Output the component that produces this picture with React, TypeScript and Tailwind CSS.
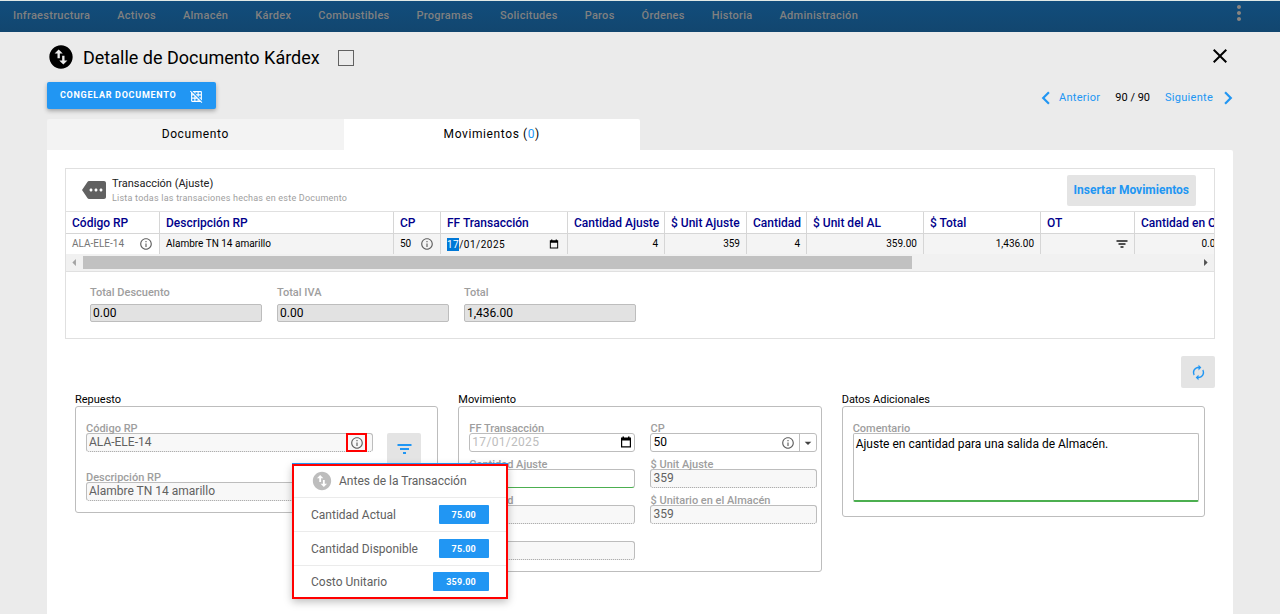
import { useEffect, useRef } from "react";
import type { ReactNode } from "react";
import {
  MdArrowDropDown,
  MdArrowLeft,
  MdArrowRight,
  MdAutorenew,
  MdChevronLeft,
  MdChevronRight,
  MdClose,
  MdGridOff,
  MdInfoOutline,
  MdMore,
  MdMoreVert,
  MdSwapVerticalCircle,
} from "react-icons/md";

const menu = [
  "Infraestructura",
  "Activos",
  "Almacén",
  "Kárdex",
  "Combustibles",
  "Programas",
  "Solicitudes",
  "Paros",
  "Órdenes",
  "Historia",
  "Administración",
];

const totals = [
  { id: "total-descuento", label: "Total Descuento", value: "0.00" },
  { id: "total-iva", label: "Total IVA", value: "0.00" },
  { id: "total", label: "Total", value: "1,436.00" },
];

const stock = [
  { label: "Cantidad Actual", value: "75.00" },
  { label: "Cantidad Disponible", value: "75.00" },
  { label: "Costo Unitario", value: "359.00" },
];

function CalendarIcon({ className }: { className: string }) {
  return (
    <svg viewBox="0 0 12 12" className={className} aria-hidden="true">
      <path d="M1 1.5h10v10H1z M2.2 4.4v5.9h7.6V4.4z" fill="currentColor" fillRule="evenodd" />
      <path d="M2.5 0.5h1.5v2H2.5z M8 0.5h1.5v2H8z" fill="currentColor" />
    </svg>
  );
}

function FilterSmallIcon({ className }: { className: string }) {
  return (
    <svg viewBox="0 0 12 8" className={className} aria-hidden="true">
      <path d="M0.5 0h11v2h-11z M2.5 3h7v2h-7z M4.5 6h3v2h-3z" fill="currentColor" />
    </svg>
  );
}

function FilterIcon({ className }: { className: string }) {
  return (
    <svg viewBox="0 0 15 10" className={className} aria-hidden="true">
      <path d="M0.5 0h14v2h-14z M3 4h9v2H3z M6 8h3v2H6z" fill="currentColor" />
    </svg>
  );
}

function Field({ id, label, children }: { id: string; label: string; children: ReactNode }) {
  return (
    <div className="min-w-0">
      <label htmlFor={id} className="block h-[10px] text-[11px] leading-[12px] font-medium whitespace-nowrap text-[#9e9e9e]">
        {label}
      </label>
      {children}
    </div>
  );
}

const fieldBox = "block h-[19px] w-full rounded-[3px] border border-[#bdbdbd] px-[2px] pb-[1px] text-xs outline-none";
const readOnlyBox = `${fieldBox} border-b-[#9e9e9e] [border-bottom-style:dotted] bg-[#f8f8f8] text-[#616161]`;

function Group({ title, className, children }: { title: string; className: string; children: ReactNode }) {
  return (
    <section className="min-w-0 px-[10px]">
      <h2 className="h-[14px] text-[11px] leading-[16px] text-black">{title}</h2>
      <div className={`rounded-[3px] border border-[#bdbdbd] px-[10px] ${className}`}>{children}</div>
    </section>
  );
}

function StockPopup() {
  return (
    <div
      role="dialog"
      aria-label="Antes de la Transacción"
      className="absolute top-[31px] left-[206px] z-10 w-[216px] border-2 border-[#ff0000] bg-white text-xs text-[#616161] shadow-[0_-1px_0_#2196f3,0_3px_8px_rgba(0,0,0,0.25)]"
    >
      <div className="flex h-[31px] items-center gap-[6px] pb-[2px] pl-[17px]">
        <MdSwapVerticalCircle className="size-[22px] text-[#bdbdbd]" />
        Antes de la Transacción
      </div>
      {stock.map((item) => (
        <div
          key={item.label}
          className="flex h-[34px] items-center justify-between border-t border-[#ebebeb] px-[17px] last:h-8"
        >
          <span>{item.label}</span>
          <span className="flex h-[19px] items-center rounded-[1px] bg-[#2196f3] px-[13px] text-[9px] font-bold tracking-wide text-white">
            {item.value}
          </span>
        </div>
      ))}
    </div>
  );
}

const th = "h-[22px] border-r border-b border-[#d6d6d6] px-[6px] text-left text-xs leading-[20px] font-medium whitespace-nowrap text-[#00008b] align-middle";
const cell = "h-[20px] border-r border-[#d6d6d6] px-[6px] py-0 text-[10px] leading-[20px] whitespace-nowrap align-middle";
const td = `${cell} bg-[#f4f4f4] text-black`;

function MovementsTable() {
  const dateRef = useRef<HTMLInputElement>(null);

  useEffect(() => {
    dateRef.current?.focus({ preventScroll: true });
    dateRef.current?.setSelectionRange(0, 2);
  }, []);

  return (
    <div className="overflow-hidden border-t border-[#e0e0e0]">
      <table className="w-[1162px] table-fixed border-separate border-spacing-0">
        <colgroup>
          <col className="w-[94px]" />
          <col className="w-[234px]" />
          <col className="w-[47px]" />
          <col className="w-[127px]" />
          <col className="w-[97px]" />
          <col className="w-[82px]" />
          <col className="w-[60px]" />
          <col className="w-[117px]" />
          <col className="w-[117px]" />
          <col className="w-[94px]" />
          <col />
        </colgroup>
        <thead>
          <tr>
            <th className={th}>Código RP</th>
            <th className={th}>Descripción RP</th>
            <th className={th}>CP</th>
            <th className={th}>FF Transacción</th>
            <th className={th}>Cantidad Ajuste</th>
            <th className={th}>$ Unit Ajuste</th>
            <th className={th}>Cantidad</th>
            <th className={th}>$ Unit del AL</th>
            <th className={th}>$ Total</th>
            <th className={th}>OT</th>
            <th className={th}>Cantidad en OT</th>
          </tr>
        </thead>
        <tbody>
          <tr>
            <td className={`${cell} text-[#757575]`}>
              <div className="flex items-center justify-between">
                ALA-ELE-14
                <MdInfoOutline className="size-[14px] text-[#616161]" />
              </div>
            </td>
            <td className={td}>Alambre TN 14 amarillo</td>
            <td className={td}>
              <div className="flex items-center justify-between">
                50
                <MdInfoOutline className="size-[14px] text-[#616161]" />
              </div>
            </td>
            <td className={td}>
              <div className="flex items-center justify-between">
                <input
                  ref={dateRef}
                  type="text"
                  aria-label="FF Transacción"
                  defaultValue="17/01/2025"
                  className="h-[13px] w-[80px] bg-transparent text-[10px] leading-[13px] tracking-wider outline-none selection:bg-[#0078d7] selection:text-white"
                />
                <CalendarIcon className="mr-[2px] size-[10px]" />
              </div>
            </td>
            <td className={`${td} text-right`}>4</td>
            <td className={`${td} text-right`}>359</td>
            <td className={`${td} text-right`}>4</td>
            <td className={`${td} text-right`}>359.00</td>
            <td className={`${td} text-right`}>1,436.00</td>
            <td className={td}>
              <FilterSmallIcon className="ml-auto h-2 w-3 text-[#505050]" />
            </td>
            <td className={`${td} text-right`}>0.00</td>
          </tr>
        </tbody>
      </table>
      <div className="flex h-[17px] items-center bg-[#f1f1f1]" aria-hidden="true">
        <MdArrowLeft className="size-[17px] text-[#a3a3a3]" />
        <div className="flex-1">
          <div className="h-[13px] w-[74.4%] bg-[#c1c1c1]" />
        </div>
        <MdArrowRight className="size-[17px] text-[#505050]" />
      </div>
    </div>
  );
}

export default function App() {
  return (
    <div className="flex min-h-screen flex-col bg-[#ebebeb] font-['Roboto',sans-serif] text-black">
      <header className="flex h-8 items-center justify-between border-t border-[#dfe9e6] bg-linear-to-b from-[#114d7c] to-[#12466f] pr-[33px] pl-[13px]">
        <nav className="flex gap-[27px] text-[11px] font-medium tracking-wide text-[#808080]">
          {menu.map((item) => (
            <a key={item} href="#">
              {item}
            </a>
          ))}
        </nav>
        <button type="button" aria-label="Más opciones" className="mb-[7px] text-[#8a8580]">
          <MdMoreVert className="-mr-[4px] size-6" />
        </button>
      </header>

      <main className="flex flex-1 flex-col px-[47px]">
        <div className="flex h-[50px] items-center justify-between pr-[1px]">
          <div className="flex items-center">
            <MdSwapVerticalCircle className="size-7" />
            <h1 className="mt-[2px] ml-2 text-lg">Detalle de Documento Kárdex</h1>
            <input
              type="checkbox"
              aria-label="Seleccionar documento"
              className="mt-[2px] ml-[18px] size-4 appearance-none border border-[#616161]"
            />
          </div>
          <button type="button" aria-label="Cerrar" className="mb-[2px]">
            <MdClose className="size-6" />
          </button>
        </div>

        <div className="flex h-[37px] items-start justify-between">
          <button
            type="button"
            className="flex h-[27px] items-center gap-[14px] rounded-[2px] bg-[#2196f3] px-[13px] pt-[1px] text-[9px] font-bold tracking-[0.08em] text-white shadow-[0_2px_4px_rgba(0,0,0,0.3)]"
          >
            CONGELAR DOCUMENTO
            <MdGridOff className="size-[13px] stroke-current" />
          </button>
          <div className="flex h-8 items-center gap-[15px] text-[11px]">
            <a href="#" className="flex items-center tracking-wide text-[#2196f3]">
              <MdChevronLeft className="size-[26px] stroke-current" />
              Anterior
            </a>
            <span>90 / 90</span>
            <a href="#" className="-mr-[8px] flex items-center gap-[2px] tracking-wide text-[#2196f3]">
              Siguiente
              <MdChevronRight className="size-[26px] stroke-current" />
            </a>
          </div>
        </div>

        <div role="tablist" className="flex h-[31px] text-xs tracking-wider">
          <button type="button" role="tab" aria-selected="false" className="w-1/4 rounded-tl-[2px] bg-[#f3f3f3] pb-[2px]">
            Documento
          </button>
          <button type="button" role="tab" aria-selected="true" className="w-1/4 rounded-tr-[2px] bg-white pb-[2px]">
            Movimientos (<span className="text-[#2196f3]">0</span>)
          </button>
        </div>

        <div className="flex-1 rounded-tr-[2px] bg-white px-[18px] pt-[18px]">
          <section className="border border-[#e0e0e0]">
            <div className="flex h-[42px] items-center justify-between pr-[18px] pl-4">
              <div className="flex items-center gap-[6px]">
                <MdMore className="size-6 text-[#616161]" />
                <div className="pt-[2px]">
                  <h2 className="text-[11px] leading-[14px] text-[#212121]">Transacción (Ajuste)</h2>
                  <p className="text-[9px] leading-[14px] tracking-wide text-[#9e9e9e]">
                    Lista todas las transaciones hechas en este Documento
                  </p>
                </div>
              </div>
              <button type="button" className="h-[31px] rounded-[2px] bg-[#e4e4e4] px-[7px] text-xs font-bold text-[#2196f3]">
                Insertar Movimientos
              </button>
            </div>

            <MovementsTable />

            <div className="flex gap-[15px] border-t border-[#e0e0e0] px-6 pt-[14px] pb-4">
              {totals.map((item) => (
                <div key={item.id} className="w-[172px]">
                  <label htmlFor={item.id} className="mb-[5px] block text-[11px] leading-[13px] font-medium text-[#9e9e9e]">
                    {item.label}
                  </label>
                  <input
                    id={item.id}
                    type="text"
                    readOnly
                    value={item.value}
                    className="block h-[18px] w-full rounded-[2px] border border-[#bdbdbd] bg-[#e2e2e2] px-[2px] text-xs outline-none"
                  />
                </div>
              ))}
            </div>
          </section>

          <div className="mt-[17px] flex justify-end">
            <button
              type="button"
              aria-label="Actualizar"
              className="flex h-8 w-[34px] items-center justify-center rounded-[2px] bg-[#e4e4e4] text-[#2196f3]"
            >
              <MdAutorenew className="size-[17px]" />
            </button>
          </div>

          <div className="mt-1 grid grid-cols-3 items-start">
            <Group title="Repuesto" className="pt-4 pb-[11px]">
              <div className="flex justify-between gap-[14px] pr-[6px]">
                <div className="relative min-w-0 flex-1">
                  <Field id="codigo-rp" label="Código RP">
                    <input id="codigo-rp" type="text" readOnly value="ALA-ELE-14" className={readOnlyBox} />
                  </Field>
                  <button
                    type="button"
                    aria-label="Información del repuesto"
                    className="absolute top-[10px] right-[6px] flex h-[19px] w-[21px] items-center justify-center border-2 border-[#ff0000] bg-[#f8f8f8]"
                  >
                    <MdInfoOutline className="size-[14px] shrink-0 text-[#616161]" />
                  </button>
                  <div className="absolute top-[10px] left-0">
                    <StockPopup />
                  </div>
                </div>
                <button
                  type="button"
                  aria-label="Filtrar repuestos"
                  className="mt-[10px] flex h-8 w-[34px] shrink-0 items-center justify-center rounded-[2px] bg-[#e4e4e4] text-[#2196f3]"
                >
                  <FilterIcon className="h-[10px] w-[15px]" />
                </button>
              </div>
              <div className="mt-[7px] pr-4">
                <Field id="descripcion-rp" label="Descripción RP">
                  <input id="descripcion-rp" type="text" readOnly value="Alambre TN 14 amarillo" className={readOnlyBox} />
                </Field>
              </div>
            </Group>

            <Group title="Movimiento" className="pt-4 pb-[11px]">
              <div className="-mr-[6px] grid grid-cols-2 gap-x-[15px] gap-y-[7px]">
                <Field id="ff-transaccion" label="FF Transacción">
                  <div className="relative">
                    <input
                      id="ff-transaccion"
                      type="text"
                      readOnly
                      value="17/01/2025"
                      className={`${fieldBox} tracking-wide text-[#bdbdbd]`}
                    />
                    <CalendarIcon className="absolute top-[3px] right-[3px] size-[12px]" />
                  </div>
                </Field>
                <Field id="cp" label="CP">
                  <div className="flex h-[19px] items-center rounded-[3px] border border-[#bdbdbd]">
                    <input id="cp" type="text" defaultValue="50" className="min-w-0 flex-1 px-[2px] pb-[1px] text-xs outline-none" />
                    <MdInfoOutline className="mr-[4px] size-[14px] text-[#616161]" />
                    <button
                      type="button"
                      aria-label="Abrir lista de CP"
                      className="flex h-full w-[17px] items-center justify-center border-l border-[#bdbdbd] text-[#424242]"
                    >
                      <MdArrowDropDown className="size-4" />
                    </button>
                  </div>
                </Field>
                <Field id="cantidad-ajuste" label="Cantidad Ajuste">
                  <input id="cantidad-ajuste" type="text" defaultValue="4" className={`${fieldBox} border-b-[#4caf50]`} />
                </Field>
                <Field id="unit-ajuste" label="$ Unit Ajuste">
                  <input id="unit-ajuste" type="text" readOnly value="359" className={readOnlyBox} />
                </Field>
                <Field id="cantidad" label="Cantidad">
                  <input id="cantidad" type="text" readOnly value="4" className={readOnlyBox} />
                </Field>
                <Field id="unitario-almacen" label="$ Unitario en el Almacén">
                  <input id="unitario-almacen" type="text" readOnly value="359" className={readOnlyBox} />
                </Field>
                <Field id="ot" label="OT">
                  <input id="ot" type="text" readOnly value="" className={readOnlyBox} />
                </Field>
              </div>
            </Group>

            <Group title="Datos Adicionales" className="pt-4 pb-[14px]">
              <div className="-mr-[5px]">
                <Field id="comentario" label="Comentario">
                  <textarea
                    id="comentario"
                    defaultValue="Ajuste en cantidad para una salida de Almacén."
                    className="block h-[69px] w-full resize-none rounded-[2px] border border-b-2 border-[#bdbdbd] border-b-[#4caf50] px-[2px] py-[2px] text-xs outline-none"
                  />
                </Field>
              </div>
            </Group>
          </div>
        </div>
      </main>
    </div>
  );
}
